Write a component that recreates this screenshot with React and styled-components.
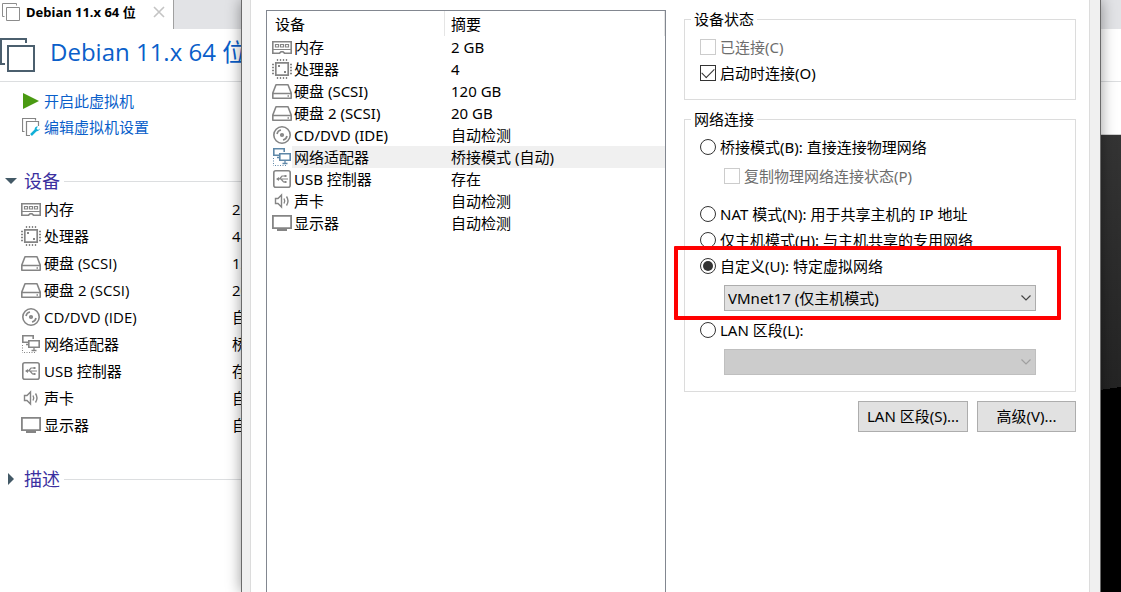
import React, { useState } from "react";
import styled, { createGlobalStyle } from "styled-components";

const GlobalStyle = createGlobalStyle`
  * {
    box-sizing: border-box;
  }
  body {
    margin: 0;
    background: #ffffff;
    color: #000000;
    font-family: "Noto Sans", "Noto Sans CJK SC", sans-serif;
    font-size: 15px;
    line-height: 20px;
  }
`;

const Desktop = styled.div`
  position: relative;
  height: 100vh;
  min-width: 1000px;
  overflow: hidden;
`;

const MainWindow = styled.div`
  height: 100%;
  display: flex;
  flex-direction: column;
  font-family: "Open Sans", "Noto Sans CJK SC", sans-serif;
`;

const TabBar = styled.div`
  display: flex;
  height: 29px;
  background: #e2e3e6;
`;

const Tab = styled.div`
  display: flex;
  align-items: center;
  width: 174px;
  padding: 0 8px 5px 2px;
  border-right: 1px solid #a0a0a0;
  background: #ffffff;
  white-space: nowrap;
`;

const TabTitle = styled.span`
  flex: 1;
  margin-left: 6px;
  font-family: "Noto Sans", "Noto Sans CJK SC", sans-serif;
  font-size: 13px;
  font-weight: bold;
`;

const CloseButton = styled.button`
  display: flex;
  padding: 0;
  border: 0;
  background: transparent;
`;

const TitleBar = styled.header`
  display: flex;
  align-items: center;
  height: 53px;
  border-bottom: 1px solid #dcdee0;
`;

const Title = styled.h1`
  margin: 0 0 6px 14px;
  color: #0a5fca;
  font-size: 24px;
  font-weight: normal;
  line-height: 36px;
  white-space: nowrap;
`;

const Content = styled.div`
  flex: 1;
  display: flex;
  min-height: 0;
`;

const Summary = styled.aside`
  width: 320px;
  padding-top: 6px;
`;

const Commands = styled.nav`
  display: flex;
  flex-direction: column;
  padding-left: 22px;
`;

const Command = styled.a`
  display: flex;
  align-items: center;
  gap: 4px;
  height: 26px;
  color: #0a5fca;
  text-decoration: none;
`;

const Section = styled.section`
  padding-top: 27px;
`;

const SectionTitle = styled.h2`
  display: flex;
  align-items: center;
  height: 28px;
  margin: 0;
  color: #3b30a0;
  font-size: 18px;
  font-weight: normal;
  line-height: 28px;

  &::after {
    content: "";
    flex: 1;
    height: 1px;
    margin-left: 4px;
    background: #dcdee0;
  }
`;

const Arrow = styled.svg`
  width: 12px;
  height: 12px;
  margin: 0 7px 0 5px;
`;

const SummaryTable = styled.table`
  width: 100%;
  border-collapse: collapse;
  table-layout: fixed;

  td {
    height: 27px;
    padding: 0;
    white-space: nowrap;
  }
  td:first-child {
    width: 232px;
    padding-left: 21px;
  }
`;

const DeviceLabel = styled.span`
  display: flex;
  align-items: center;
  gap: 3px;
`;

const Console = styled.div`
  flex: 1;
  margin-top: 52px;
  border-top: 1px solid #d0d0d0;
  background: linear-gradient(172deg, #3b3b3b 0%, #242424 64%, #000000 64%);
`;

const Dialog = styled.div`
  position: absolute;
  top: 0;
  bottom: 0;
  left: 241px;
  right: 20px;
  padding: 0 10px 0 8px;
  border: solid #6a6a6a;
  border-width: 0 1px;
  background: #f0f0f0;
  box-shadow: 0 0 14px rgba(0, 0, 0, 0.4);
`;

const Page = styled.div`
  display: grid;
  grid-template-columns: 400px 1fr;
  gap: 18px;
  height: 100%;
  padding: 0 13px 0 15px;
  border: solid #dcdcdc;
  border-width: 0 1px;
  background: #ffffff;
`;

const DeviceList = styled.div`
  margin-top: 10px;
  border: 1px solid #828790;
  border-bottom: 0;
`;

const DeviceTable = styled.table`
  width: 100%;
  border-spacing: 0;
  table-layout: fixed;

  th {
    height: 25px;
    padding: 0 0 0 8px;
    border-right: 1px solid #e5e5e5;
    font-weight: normal;
    text-align: left;
  }
  th:first-child {
    width: 178px;
  }
  th:last-child {
    padding-left: 6px;
  }
`;

const DeviceRow = styled.tr`
  td {
    height: 22px;
    padding: 0 0 0 6px;
    white-space: nowrap;
  }
  td:first-child {
    padding-left: 5px;
  }
  td:last-child {
    background: ${props => (props.$selected ? "#f0f0f0" : "transparent")};
  }
`;

const DeviceCell = styled.div`
  display: flex;
  align-items: center;
  height: 22px;
`;

const DeviceName = styled.span`
  flex: 1;
  padding-left: 2px;
  line-height: 22px;
  background: ${props => (props.$selected ? "#f0f0f0" : "transparent")};
`;

const Settings = styled.form`
  display: flex;
  flex-direction: column;
  gap: 9px;
  padding-top: 9px;
`;

const Group = styled.fieldset`
  min-width: 0;
  margin: 0;
  padding: 5px 15px ${props => props.$bottom}px;
  border: 1px solid #dcdcdc;
`;

const Legend = styled.legend`
  margin-left: -9px;
  padding: 0 3px;
`;

const OptionRow = styled.label`
  display: flex;
  align-items: center;
  gap: 4px;
  height: 26px;
  white-space: nowrap;
  color: ${props => (props.$disabled ? "#6d6d6d" : "#000000")};
`;

const NestedOption = styled.div`
  margin: 3px 0 12px;
  padding-left: 24px;
`;

const Toggle = styled.input`
  appearance: none;
  flex: none;
  width: 16px;
  height: 16px;
  margin: 0;
  border: 1px solid #333333;
  background: #ffffff;

  &:disabled {
    border-color: #cccccc;
  }
`;

const CheckInput = styled(Toggle).attrs({ type: "checkbox" })`
  display: grid;
  place-items: center;

  &:checked::before {
    content: "";
    width: 11px;
    height: 6px;
    border: solid #333333;
    border-width: 0 0 1px 1px;
    transform: translateY(-2px) rotate(-45deg);
  }
`;

const RadioInput = styled(Toggle).attrs({ type: "radio" })`
  border-radius: 50%;

  &:checked {
    background: #333333;
    background-clip: content-box;
    padding: 2px;
  }
`;

const SelectWrapper = styled.div`
  display: grid;
  align-items: center;
  margin: 6px 24px;

  > * {
    grid-area: 1 / 1;
  }
  svg {
    justify-self: end;
    margin-right: 5px;
    pointer-events: none;
  }
`;

const Select = styled.select`
  appearance: none;
  width: 100%;
  height: 26px;
  padding: 0 24px 0 3px;
  border: 1px solid #adadad;
  border-radius: 0;
  background: #e1e1e1;
  color: #000000;
  font: inherit;

  &:disabled {
    border-color: #bfbfbf;
    background: #cccccc;
    opacity: 1;
  }
`;

const Highlighted = styled.div`
  position: relative;
`;

const Marker = styled.div`
  position: absolute;
  top: -7px;
  right: -1px;
  bottom: -9px;
  left: -26px;
  border: 4px solid #ff0000;
  border-radius: 1px;
  pointer-events: none;
`;

const Buttons = styled.div`
  display: flex;
  justify-content: flex-end;
  gap: 9px;
`;

const Button = styled.button`
  min-width: 99px;
  height: 31px;
  padding: 0 8px 2px;
  border: 1px solid #adadad;
  background: #e1e1e1;
  color: #000000;
  font: inherit;
`;

const IconSvg = styled.svg`
  display: block;
  flex: none;
  fill: none;
  stroke: ${props => props.$color || "#858585"};
`;

const shapes = {
  memory: (
    <>
      <path d="M.8 4.8h18.4v11.4h-6.7L11 14.8H9l-1.500 1.400H.8z" strokeWidth="1.6" />
      <path d="M3.500 7.500h3v2.500h-3zM8.500 7.500h3v2.500h-3zM13.500 7.500h3v2.500h-3zM1 12.500h18" strokeWidth="1.2" />
    </>
  ),
  cpu: (
    <>
      <path d="M3.800 3.800h12.400v12.400H3.800z" strokeWidth="1.7" />
      <path
        d="M5.500 0v2M8.500 0v2M11.500 0v2M14.500 0v2M5.500 18v2M8.500 18v2M11.500 18v2M14.500 18v2M0 5.500h2M0 8.500h2M0 11.500h2M0 14.500h2M18 5.500h2M18 8.500h2M18 11.500h2M18 14.500h2"
        strokeWidth="1.3"
      />
      <path d="M6 7h2M12 13h2" strokeWidth="2" />
    </>
  ),
  disk: (
    <>
      <path
        d="M4 3.800h12L19.200 12v5.200H.8V12zM.8 12.500h18.400"
        strokeWidth="1.6"
        strokeLinejoin="round"
      />
      <path d="M15.500 15h1.500" strokeWidth="1.4" />
    </>
  ),
  disc: (
    <>
      <circle cx="10" cy="10" r="8.2" strokeWidth="1.6" />
      <circle cx="10" cy="10" r="1.2" strokeWidth="1.8" />
      <path d="M5 9a5 5 0 0 1 4-4M15 11a5 5 0 0 1-4 4" strokeWidth="1.6" />
    </>
  ),
  network: (
    <>
      <path d="M7.500 8.200H1.800V1.800h10.400V5M5 10.500h3" strokeWidth="1.6" />
      <path d="M7.800 6.800h10.400v6.400H7.800z" strokeWidth="1.6" />
      <path d="M13 14v2M10.500 16.500h5" strokeWidth="1.3" />
      <path d="M1.500 11v8M3 18.500h11" strokeDasharray="1 1.500" />
    </>
  ),
  usb: (
    <>
      <rect x="1.8" y="1.8" width="16.4" height="16.4" rx="2" strokeWidth="1.6" />
      <path d="M5 10h11M7.500 10L10 7h3M9 10l2.500 3H13" strokeWidth="1.2" />
      <path d="M4 10l3-2v4zM12.500 6h2v2h-2zM12.500 12h2v2h-2z" fill="#858585" stroke="none" />
    </>
  ),
  sound: (
    <path
      d="M3.500 7.500h2.500L9.500 4v12L6 12.500H3.500zM12 7.500q1.500 2.500 0 5M14.500 5.500q3 4.500 0 9"
      strokeWidth="1.4"
    />
  ),
  display: (
    <>
      <path d="M.9 2.900h18.200v12.200H.9z" strokeWidth="1.800" />
      <path d="M5 17h10" strokeWidth="2" />
    </>
  )
};

const DeviceIcon = ({ name, color }) => (
  <IconSvg width="20" height="20" viewBox="0 0 20 20" $color={color}>
    {shapes[name]}
  </IconSvg>
);

const Chevron = ({ color }) => (
  <IconSvg width="10" height="6" viewBox="0 0 10 6" $color={color}>
    <path d="M.5.5L5 5 9.500.5" strokeWidth="1.2" />
  </IconSvg>
);

const devices = [
  { icon: "memory", name: "内存", summary: "2 GB" },
  { icon: "cpu", name: "处理器", summary: "4" },
  { icon: "disk", name: "硬盘 (SCSI)", summary: "120 GB" },
  { icon: "disk", name: "硬盘 2 (SCSI)", summary: "20 GB" },
  { icon: "disc", name: "CD/DVD (IDE)", summary: "自动检测" },
  { icon: "network", name: "网络适配器", summary: "桥接模式 (自动)" },
  { icon: "usb", name: "USB 控制器", summary: "存在" },
  { icon: "sound", name: "声卡", summary: "自动检测" },
  { icon: "display", name: "显示器", summary: "自动检测" }
];

const VirtualMachine = () => (
  <MainWindow>
    <TabBar>
      <Tab>
        <IconSvg width="18" height="18" viewBox="0 0 18 18" $color="#8c8c8c">
          <path d="M2.500 13.500h-2V.5h14v2M4.500 4.500h13v13h-13z" />
        </IconSvg>
        <TabTitle>Debian 11.x 64 位</TabTitle>
        <CloseButton aria-label="关闭">
          <IconSvg width="12" height="12" viewBox="0 0 12 12" $color="#c4c4c4">
            <path d="M1 1l10 10M11 1L1 11" strokeWidth="1.6" />
          </IconSvg>
        </CloseButton>
      </Tab>
    </TabBar>
    <TitleBar>
      <IconSvg width="36" height="36" viewBox="0 0 36 36" $color="#4b5f6e">
        <path d="M5 27H0M1 27V2h25v4M8 9h26v25H8z" strokeWidth="2" />
      </IconSvg>
      <Title>Debian 11.x 64 位</Title>
    </TitleBar>
    <Content>
      <Summary>
        <Commands>
          <Command href="#power-on">
            <svg width="18" height="18" viewBox="0 0 18 18">
              <path d="M1 1l16 8-16 8z" fill="#4a9a12" />
            </svg>
            开启此虚拟机
          </Command>
          <Command href="#settings">
            <IconSvg width="18" height="18" viewBox="0 0 18 18">
              <path d="M2.500 13.500h-2V.5h13v2M8 17.500H4.500v-14h12V8" strokeWidth="1.2" />
              <path d="M9 17l5-5" stroke="#12b0d8" strokeWidth="2.500" />
              <path
                d="M18 10.500l-2 1.500-1.500-1.500 1.500-2c-2-.5-4 1.500-3 3.500s4 1.500 5-1.500z"
                fill="#12b0d8"
                stroke="none"
              />
            </IconSvg>
            编辑虚拟机设置
          </Command>
        </Commands>
        <Section>
          <SectionTitle>
            <Arrow viewBox="0 0 12 12">
              <path d="M0 3h12L6 9z" fill="#435966" />
            </Arrow>
            设备
          </SectionTitle>
          <SummaryTable>
            <tbody>
              {devices.map(device => (
                <tr key={device.name}>
                  <td>
                    <DeviceLabel>
                      <DeviceIcon name={device.icon} />
                      {device.name}
                    </DeviceLabel>
                  </td>
                  <td>{device.summary}</td>
                </tr>
              ))}
            </tbody>
          </SummaryTable>
        </Section>
        <Section>
          <SectionTitle>
            <Arrow viewBox="0 0 12 12">
              <path d="M3 0v12l6-6z" fill="#435966" />
            </Arrow>
            描述
          </SectionTitle>
        </Section>
      </Summary>
      <Console />
    </Content>
  </MainWindow>
);

export default () => {
  const [selected, setSelected] = useState("网络适配器");
  const [mode, setMode] = useState("custom");
  const [connectAtPowerOn, setConnectAtPowerOn] = useState(true);

  const renderMode = (value, text) => (
    <OptionRow>
      <RadioInput
        name="network"
        value={value}
        checked={mode === value}
        onChange={() => setMode(value)}
      />
      {text}
    </OptionRow>
  );

  return (
    <>
      <GlobalStyle />
      <Desktop>
        <VirtualMachine />
        <Dialog role="dialog" aria-label="虚拟机设置">
          <Page>
            <DeviceList>
              <DeviceTable>
                <thead>
                  <tr>
                    <th>设备</th>
                    <th>摘要</th>
                  </tr>
                </thead>
                <tbody>
                  {devices.map(device => {
                    const active = selected === device.name;
                    return (
                      <DeviceRow
                        key={device.name}
                        $selected={active}
                        onClick={() => setSelected(device.name)}
                      >
                        <td>
                          <DeviceCell>
                            <DeviceIcon
                              name={device.icon}
                              color={active ? "#5e87a8" : "#858585"}
                            />
                            <DeviceName $selected={active}>{device.name}</DeviceName>
                          </DeviceCell>
                        </td>
                        <td>{device.summary}</td>
                      </DeviceRow>
                    );
                  })}
                </tbody>
              </DeviceTable>
            </DeviceList>
            <Settings onSubmit={e => e.preventDefault()}>
              <Group $bottom={13}>
                <Legend>设备状态</Legend>
                <OptionRow $disabled>
                  <CheckInput disabled />
                  已连接(C)
                </OptionRow>
                <OptionRow>
                  <CheckInput
                    checked={connectAtPowerOn}
                    onChange={e => setConnectAtPowerOn(e.target.checked)}
                  />
                  启动时连接(O)
                </OptionRow>
              </Group>
              <Group $bottom={10}>
                <Legend>网络连接</Legend>
                {renderMode("bridged", "桥接模式(B): 直接连接物理网络")}
                <NestedOption>
                  <OptionRow $disabled>
                    <CheckInput disabled />
                    复制物理网络连接状态(P)
                  </OptionRow>
                </NestedOption>
                {renderMode("nat", "NAT 模式(N): 用于共享主机的 IP 地址")}
                {renderMode("host", "仅主机模式(H): 与主机共享的专用网络")}
                <Highlighted>
                  {renderMode("custom", "自定义(U): 特定虚拟网络")}
                  <SelectWrapper>
                    <Select aria-label="特定虚拟网络" disabled={mode !== "custom"}>
                      <option>VMnet17 (仅主机模式)</option>
                    </Select>
                    <Chevron color="#444444" />
                  </SelectWrapper>
                  <Marker />
                </Highlighted>
                {renderMode("lan", "LAN 区段(L):")}
                <SelectWrapper>
                  <Select aria-label="LAN 区段" disabled={mode !== "lan"} />
                  <Chevron color="#a0a0a0" />
                </SelectWrapper>
              </Group>
              <Buttons>
                <Button type="button">LAN 区段(S)...</Button>
                <Button type="button">高级(V)...</Button>
              </Buttons>
            </Settings>
          </Page>
        </Dialog>
      </Desktop>
    </>
  );
};
